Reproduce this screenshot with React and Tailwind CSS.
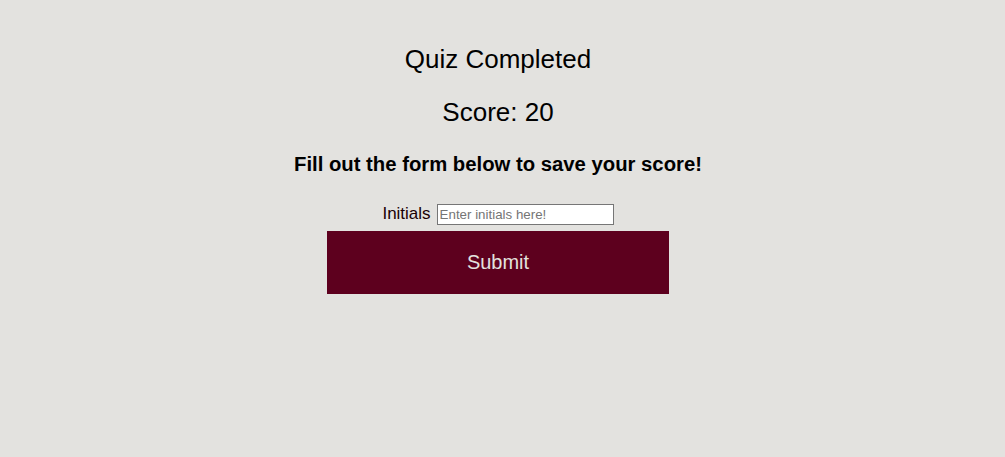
export default function App() {
  return (
    <div className="min-h-[457px] w-full bg-[#e3e2df] font-['Liberation_Sans',Arial,sans-serif] text-black">
      <div className="flex w-[996px] flex-col items-center pt-[44px]">
        <h2 className="text-[26px] leading-[30px] font-normal">Quiz Completed</h2>
        <h2 className="mt-[23px] text-[26px] leading-[30px] font-normal">Score: 20</h2>
        <h3 className="mt-[25px] text-[20.3px] leading-[24px] font-bold">
          Fill out the form below to save your score!
        </h3>
        <form className="mt-[28px] flex flex-col items-center" onSubmit={(e) => e.preventDefault()}>
          <div className="flex h-[21px] items-baseline gap-[6px]">
            <label className="text-[17px] leading-[20px] text-[#1a0005]">Initials</label>
            <input
              type="text"
              placeholder="Enter initials here!"
              className="box-border h-[21px] w-[177px] border border-[#767676] bg-white px-[2px] text-[13.33px] leading-[15px] placeholder:text-[#757575] font-['Liberation_Sans',Arial,sans-serif]"
            />
          </div>
          <button
            type="submit"
            className="mt-[6px] flex h-[63px] w-[342px] items-center justify-center bg-[#5d001e] pb-[2px] text-[20px] text-[#e3e2df]"
          >
            Submit
          </button>
        </form>
      </div>
    </div>
  );
}
